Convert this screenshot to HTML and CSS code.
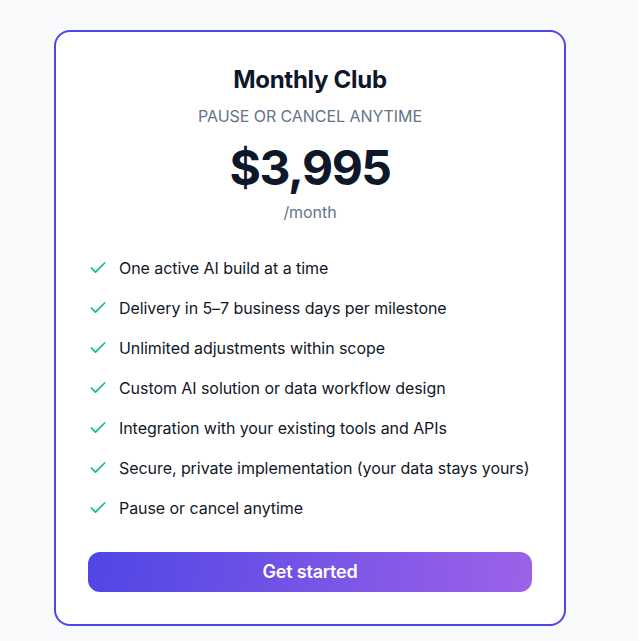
FILE: index.html
```html
<!DOCTYPE html>
<html lang="en">
<head>
<meta charset="utf-8">
<title>Monthly Club</title>
<link rel="stylesheet" href="styles.css">
</head>
<body>
<div class="page">
  <div class="card">
    <h2 class="title">Monthly Club</h2>
    <p class="subtitle">PAUSE OR CANCEL ANYTIME</p>
    <p class="price">$3,995</p>
    <p class="period">/month</p>
    <ul class="features">
      <li><svg class="check" viewBox="0 0 24 24" fill="none" stroke="currentColor" stroke-width="2" stroke-linecap="round" stroke-linejoin="round"><path d="M20 6 9 17l-5-5"/></svg><span>One active AI build at a time</span></li>
      <li><svg class="check" viewBox="0 0 24 24" fill="none" stroke="currentColor" stroke-width="2" stroke-linecap="round" stroke-linejoin="round"><path d="M20 6 9 17l-5-5"/></svg><span>Delivery in 5–7 business days per milestone</span></li>
      <li><svg class="check" viewBox="0 0 24 24" fill="none" stroke="currentColor" stroke-width="2" stroke-linecap="round" stroke-linejoin="round"><path d="M20 6 9 17l-5-5"/></svg><span>Unlimited adjustments within scope</span></li>
      <li><svg class="check" viewBox="0 0 24 24" fill="none" stroke="currentColor" stroke-width="2" stroke-linecap="round" stroke-linejoin="round"><path d="M20 6 9 17l-5-5"/></svg><span>Custom AI solution or data workflow design</span></li>
      <li><svg class="check" viewBox="0 0 24 24" fill="none" stroke="currentColor" stroke-width="2" stroke-linecap="round" stroke-linejoin="round"><path d="M20 6 9 17l-5-5"/></svg><span>Integration with your existing tools and APIs</span></li>
      <li><svg class="check" viewBox="0 0 24 24" fill="none" stroke="currentColor" stroke-width="2" stroke-linecap="round" stroke-linejoin="round"><path d="M20 6 9 17l-5-5"/></svg><span>Secure, private implementation (your data stays yours)</span></li>
      <li><svg class="check" viewBox="0 0 24 24" fill="none" stroke="currentColor" stroke-width="2" stroke-linecap="round" stroke-linejoin="round"><path d="M20 6 9 17l-5-5"/></svg><span>Pause or cancel anytime</span></li>
    </ul>
    <a class="cta" href="#">Get started</a>
  </div>
</div>
</body>
</html>
```

FILE: styles.css
```css
* { box-sizing: border-box; }
html, body {
  margin: 0;
  padding: 0;
  background: #f8fafc;
  font-family: Inter, "Noto Sans", "Liberation Sans", sans-serif;
  color: #0f172a;
  letter-spacing: -0.004em;
}
.page {
  padding: 30px 0 0 54px;
}
.card {
  width: 512px;
  background: #ffffff;
  border: 2px solid #4f46e5;
  border-radius: 16px;
  padding: 32px;
  display: flex;
  flex-direction: column;
}
.title {
  margin: 0;
  text-align: center;
  font-size: 24px;
  line-height: 32px;
  font-weight: 700;
  color: #0f172a;
  letter-spacing: -0.012em;
}
.subtitle {
  margin: 8px 0 0;
  text-align: center;
  font-size: 16px;
  line-height: 24px;
  color: #64748b;
}
.price {
  margin: 16px 0 0;
  text-align: center;
  font-size: 48px;
  line-height: 48px;
  font-weight: 700;
  color: #0f172a;
  letter-spacing: -0.03em;
}
.period {
  margin: 8px 0 0;
  text-align: center;
  font-size: 16px;
  line-height: 24px;
  color: #64748b;
}
.features {
  list-style: none;
  margin: 32px 0 0;
  padding: 0;
  display: flex;
  flex-direction: column;
  gap: 16px;
}
.features li {
  display: flex;
  align-items: center;
  gap: 11px;
  font-size: 16px;
  line-height: 24px;
  color: #111827;
  white-space: nowrap;
}
.check {
  width: 20px;
  height: 20px;
  flex: none;
  color: #10b981;
}
.cta {
  margin-top: 32px;
  display: block;
  height: 40px;
  line-height: 40px;
  text-align: center;
  text-decoration: none;
  color: #ffffff;
  font-size: 18px;
  font-weight: 600;
  letter-spacing: -0.01em;
  border-radius: 12px;
  background: linear-gradient(100deg, #4f46e5 0%, #9d62e8 100%);
}
```
